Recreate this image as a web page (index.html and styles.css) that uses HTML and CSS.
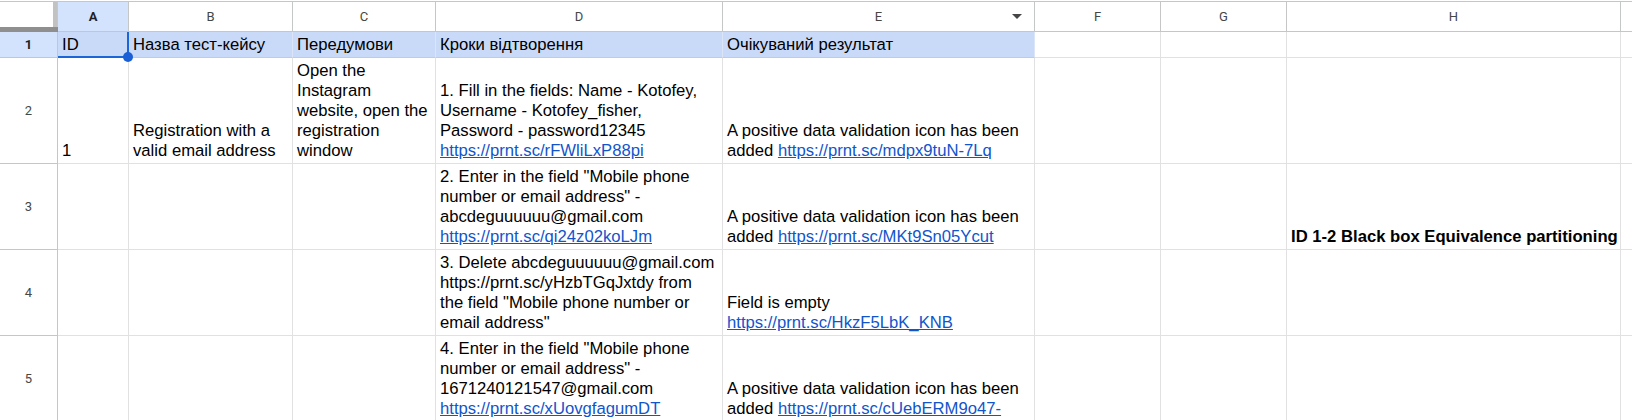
FILE: index.html
```html
<!DOCTYPE html>
<html lang="uk">
<head>
<meta charset="utf-8">
<title>Test cases</title>
<link rel="stylesheet" href="styles.css">
</head>
<body>
<div class="sheet">
  <div class="corner"><div class="corner-top"><div class="vbar"></div></div><div class="hbar"></div></div>
  <div class="ch ch-sel">A</div>
  <div class="ch">B</div>
  <div class="ch">C</div>
  <div class="ch">D</div>
  <div class="ch ch-menu"><span></span><span>E</span><span class="tri"></span></div>
  <div class="ch">F</div>
  <div class="ch">G</div>
  <div class="ch">H</div>
  <div class="ch ch-last"></div>

  <div class="rh rh-sel">1</div>
  <div class="c blue a1">ID<span class="handle"></span></div>
  <div class="c blue">Назва тест-кейсу</div>
  <div class="c blue">Передумови</div>
  <div class="c blue">Кроки відтворення</div>
  <div class="c blue">Очікуваний результат</div>
  <div class="c"></div>
  <div class="c"></div>
  <div class="c"></div>
  <div class="c c-last"></div>

  <div class="rh">2</div>
  <div class="c">1</div>
  <div class="c">Registration with a<br>valid email address</div>
  <div class="c">Open the<br>Instagram<br>website, open the<br>registration<br>window</div>
  <div class="c">1. Fill in the fields: Name - Kotofey,<br>Username - Kotofey_fisher,<br>Password - password12345<br><a class="link" href="#">https://prnt.sc/rFWliLxP88pi</a></div>
  <div class="c">A positive data validation icon has been<br>added <a class="link" href="#">https://prnt.sc/mdpx9tuN-7Lq</a></div>
  <div class="c"></div>
  <div class="c"></div>
  <div class="c"></div>
  <div class="c c-last"></div>

  <div class="rh">3</div>
  <div class="c"></div>
  <div class="c"></div>
  <div class="c"></div>
  <div class="c">2. Enter in the field "Mobile phone<br>number or email address" -<br>abcdeguuuuuu@gmail.com<br><a class="link" href="#">https://prnt.sc/qi24z02koLJm</a></div>
  <div class="c">A positive data validation icon has been<br>added <a class="link" href="#">https://prnt.sc/MKt9Sn05Ycut</a></div>
  <div class="c"></div>
  <div class="c"></div>
  <div class="c bold">ID 1-2 Black box Equivalence partitioning</div>
  <div class="c c-last"></div>

  <div class="rh">4</div>
  <div class="c"></div>
  <div class="c"></div>
  <div class="c"></div>
  <div class="c">3. Delete abcdeguuuuuu@gmail.com<br>https://prnt.sc/yHzbTGqJxtdy from<br>the field "Mobile phone number or<br>email address"</div>
  <div class="c">Field is empty<br><a class="link" href="#">https://prnt.sc/HkzF5LbK_KNB</a></div>
  <div class="c"></div>
  <div class="c"></div>
  <div class="c"></div>
  <div class="c c-last"></div>

  <div class="rh">5</div>
  <div class="c"></div>
  <div class="c"></div>
  <div class="c"></div>
  <div class="c">4. Enter in the field "Mobile phone<br>number or email address" -<br>1671240121547@gmail.com<br><a class="link" href="#">https://prnt.sc/xUovgfagumDT</a></div>
  <div class="c">A positive data validation icon has been<br>added <a class="link" href="#">https://prnt.sc/cUebERM9o47-</a></div>
  <div class="c"></div>
  <div class="c"></div>
  <div class="c"></div>
  <div class="c c-last"></div>
</div>
</body>
</html>
```

FILE: styles.css
```css
html, body {
  margin: 0;
  padding: 0;
  background: #ffffff;
  overflow: hidden;
}

.sheet {
  margin-top: 1px;
  display: grid;
  grid-template-columns: 58px 71px 164px 143px 287px 312px 126px 126px 334px 1fr;
  grid-template-rows: 31px 26px 106px 86px 86px 86px;
  width: 1632px;
}

/* corner with freeze handles */
.corner {
  display: flex;
  flex-direction: column;
  border-top: 1px solid #c4c7c5;
  background: #ffffff;
}
.corner-top {
  flex: 1;
  display: flex;
  justify-content: flex-end;
}
.vbar {
  width: 4px;
  background: #c2c2c2;
  border-right: 1px solid #c4c7c5;
}
.hbar {
  height: 5px;
  background: #8f8f8f;
}

/* column headers */
.ch {
  box-sizing: border-box;
  border-top: 1px solid #c4c7c5;
  border-right: 1px solid #c4c7c5;
  border-bottom: 1px solid #c4c7c5;
  display: flex;
  align-items: center;
  justify-content: center;
  font-family: Roboto, "Liberation Sans", Arial, sans-serif;
  font-size: 13px;
  color: #444746;
  background: #ffffff;
}
.ch-sel {
  background: #d3e3fd;
  font-weight: bold;
  color: #1f1f1f;
}
.ch-last {
  border-right: none;
}
.ch-menu {
  display: grid;
  grid-template-columns: 1fr auto 1fr;
  align-items: center;
  justify-items: center;
}
.tri {
  justify-self: end;
  margin-right: 12px;
  width: 0;
  height: 0;
  border-left: 5px solid transparent;
  border-right: 5px solid transparent;
  border-top: 5px solid #444746;
}

/* row headers */
.rh {
  box-sizing: border-box;
  border-right: 1px solid #c4c7c5;
  border-bottom: 1px solid #c4c7c5;
  display: flex;
  align-items: center;
  justify-content: center;
  font-family: Roboto, "Liberation Sans", Arial, sans-serif;
  font-size: 13px;
  color: #444746;
  background: #ffffff;
}
.rh-sel {
  background: #d3e3fd;
  font-weight: bold;
  color: #1f1f1f;
}

/* cells: bottom-aligned text */
.c {
  box-sizing: border-box;
  display: block;
  align-content: end;
  border-right: 1px solid #e1e1e1;
  border-bottom: 1px solid #e1e1e1;
  padding: 0 3px 2px 4px;
  font-family: "Liberation Sans", Arial, sans-serif;
  font-size: 16.67px;
  line-height: 20px;
  color: #000000;
  white-space: nowrap;
  overflow: hidden;
  min-width: 0;
}
.c-last {
  border-right: none;
}
.blue {
  background: #c9daf8;
  border-right-color: #dbe5f7;
  border-bottom-color: #b9cbee;
}
.a1 {
  position: relative;
  overflow: visible;
  border-right: 2px solid #1a66d8;
  border-bottom: 2px solid #1a66d8;
  padding-bottom: 1px;
}
.handle {
  position: absolute;
  right: -6px;
  bottom: -6px;
  width: 10px;
  height: 10px;
  border-radius: 50%;
  background: #1a5fd6;
  z-index: 2;
}
.bold {
  font-weight: bold;
  overflow: visible;
}
.link {
  color: #1155cc;
  text-decoration: underline;
  white-space: nowrap;
}
```
